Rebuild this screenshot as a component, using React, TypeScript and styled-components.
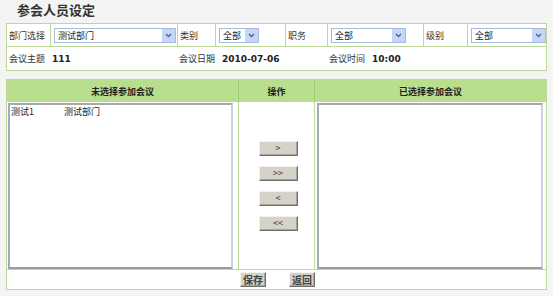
import styled, { createGlobalStyle } from "styled-components";

const GlobalStyle = createGlobalStyle`
  body {
    margin: 0;
    background: #f4f4f4;
    font-family: "DejaVu Sans", "Noto Sans CJK SC", sans-serif;
    color: #333;
  }
`;

const green = "#bcd999";

const Page = styled.div`
  width: 553px;
  height: 296px;
  display: flex;
  flex-direction: column;
`;

const Title = styled.div`
  height: 23px;
  box-sizing: border-box;
  padding: 1px 0 0 17px;
  font-family: "Noto Sans CJK SC", sans-serif;
  font-size: 13px;
  font-weight: 700;
  line-height: 17px;
  color: #333;
`;

const FilterTable = styled.div`
  margin: 0 6px;
  width: 541px;
  box-sizing: border-box;
  border: 1px solid ${green};
  background: #fff;
`;

const FilterRow = styled.div<{ $line?: boolean }>`
  display: grid;
  grid-template-columns: 43px 127px 38px 70px 42px 96px 44px 79px;
  height: ${({ $line }) => ($line ? 23 : 22)}px;
  border-top: ${({ $line }) => ($line ? `1px solid ${green}` : "none")};
`;

const Cell = styled.div<{ $divider?: boolean }>`
  display: flex;
  align-items: center;
  box-sizing: border-box;
  padding-left: 2px;
  border-left: ${({ $divider }) => ($divider ? `1px solid ${green}` : "none")};
  font-family: "Noto Sans CJK SC", sans-serif;
  font-size: 9px;
  white-space: nowrap;
`;

const Value = styled.span`
  margin-left: 7px;
  font-family: "DejaVu Sans", sans-serif;
  font-weight: 700;
  font-size: 9px;
  color: #222;
`;

const SelectBox = styled.div<{ $w: number }>`
  width: ${({ $w }) => $w}px;
  height: 15px;
  box-sizing: border-box;
  margin-left: 1px;
  border: 1px solid #a7badb;
  background: #fff;
  display: flex;
  align-items: center;
  justify-content: space-between;
  padding-left: 3px;
  font-family: "Noto Sans CJK SC", sans-serif;
  font-size: 9px;
  color: #222;
`;

const Arrow = styled.span`
  width: 13px;
  height: 13px;
  background: #c6d6f6;
  display: flex;
  align-items: center;
  justify-content: center;
`;

const Select = ({ w, text }: { w: number; text: string }) => (
  <SelectBox $w={w}>
    <span>{text}</span>
    <Arrow>
      <svg width="7" height="5" viewBox="0 0 7 5">
        <path d="M1 1 L3.5 3.5 L6 1" stroke="#4a6492" strokeWidth="1.4" fill="none" />
      </svg>
    </Arrow>
  </SelectBox>
);

const Panel = styled.div`
  margin: 8px 6px 0;
  width: 541px;
  box-sizing: border-box;
  border: 1px solid ${green};
  background: #fff;
`;

const PanelGrid = styled.div`
  display: grid;
  grid-template-columns: 231px 76px 232px;
  grid-template-rows: 22px 167px;
`;

const Head = styled.div<{ $divider?: boolean }>`
  background: #b9df8e;
  border-left: ${({ $divider }) => ($divider ? "1px solid #a3cc78" : "none")};
  display: flex;
  align-items: center;
  justify-content: center;
  font-family: "Noto Sans CJK SC", sans-serif;
  font-size: 9px;
  font-weight: 700;
  color: #222;
`;

const ListCell = styled.div<{ $divider?: boolean }>`
  box-sizing: border-box;
  padding: 1px ${({ $divider }) => ($divider ? "3px 0 2px" : "5px 0 1px")};
  border-left: ${({ $divider }) => ($divider ? `1px solid ${green}` : "none")};
`;

const ListBox = styled.div`
  height: 166px;
  box-sizing: border-box;
  border-top: 2px solid #a9a9a9;
  border-left: 2px solid #a4abb8;
  border-right: 2px solid #c9d2e2;
  border-bottom: 2px solid #9c9c9c;
  background: #fff;
  padding: 1px 0 0 1px;
`;

const Option = styled.div`
  display: flex;
  font-family: "Noto Sans CJK SC", sans-serif;
  font-size: 9px;
  line-height: 11px;
  color: #222;
  span:first-child {
    width: 53px;
  }
`;

const ActionCell = styled.div`
  border-left: 1px solid ${green};
  display: flex;
  flex-direction: column;
  align-items: center;
  justify-content: center;
  gap: 10px;
  padding-left: 3px;
`;

const Btn = styled.button<{ $w: number }>`
  width: ${({ $w }) => $w}px;
  height: 15px;
  padding: 0;
  background: #d6d2ca;
  border: 1px solid;
  border-color: #f4f2ee #6f6f6f #6f6f6f #f4f2ee;
  box-shadow: inset -1px -1px 0 #a8a49c;
  font-family: "Noto Sans CJK SC", "DejaVu Sans", sans-serif;
  font-size: 9px;
  line-height: 12px;
  color: #333;
`;

const Footer = styled.div`
  height: 19px;
  border-top: 1px solid ${green};
  display: flex;
  align-items: center;
  justify-content: center;
  gap: 23px;
  padding-left: 2px;
`;

const FooterBtn = styled(Btn)`
  font-size: 10px;
  font-weight: 700;
  color: #444;
`;

const App = () => (
  <Page>
    <GlobalStyle />
    <Title>参会人员设定</Title>
    <FilterTable>
      <FilterRow>
        <Cell>部门选择</Cell>
        <Cell $divider>
          <Select w={122} text="测试部门" />
        </Cell>
        <Cell $divider>类别</Cell>
        <Cell $divider>
          <Select w={40} text="全部" />
        </Cell>
        <Cell $divider>职务</Cell>
        <Cell $divider>
          <Select w={75} text="全部" />
        </Cell>
        <Cell $divider>级别</Cell>
        <Cell $divider>
          <Select w={76} text="全部" />
        </Cell>
      </FilterRow>
      <FilterRow $line>
        <Cell>会议主题</Cell>
        <Cell>
          <Value style={{ marginLeft: 0 }}>111</Value>
        </Cell>
        <Cell style={{ gridColumn: "span 2" }}>
          会议日期<Value>2010-07-06</Value>
        </Cell>
        <Cell />
        <Cell style={{ gridColumn: "span 3" }}>
          会议时间<Value>10:00</Value>
        </Cell>
      </FilterRow>
    </FilterTable>
    <Panel>
      <PanelGrid>
        <Head>未选择参加会议</Head>
        <Head $divider>操作</Head>
        <Head $divider>已选择参加会议</Head>
        <ListCell>
          <ListBox>
            <Option>
              <span>测试1</span>
              <span>测试部门</span>
            </Option>
          </ListBox>
        </ListCell>
        <ActionCell>
          <Btn $w={39}>&gt;</Btn>
          <Btn $w={39}>&gt;&gt;</Btn>
          <Btn $w={39}>&lt;</Btn>
          <Btn $w={39}>&lt;&lt;</Btn>
        </ActionCell>
        <ListCell $divider>
          <ListBox />
        </ListCell>
      </PanelGrid>
      <Footer>
        <FooterBtn $w={26}>保存</FooterBtn>
        <FooterBtn $w={26}>返回</FooterBtn>
      </Footer>
    </Panel>
  </Page>
);

export default App;
